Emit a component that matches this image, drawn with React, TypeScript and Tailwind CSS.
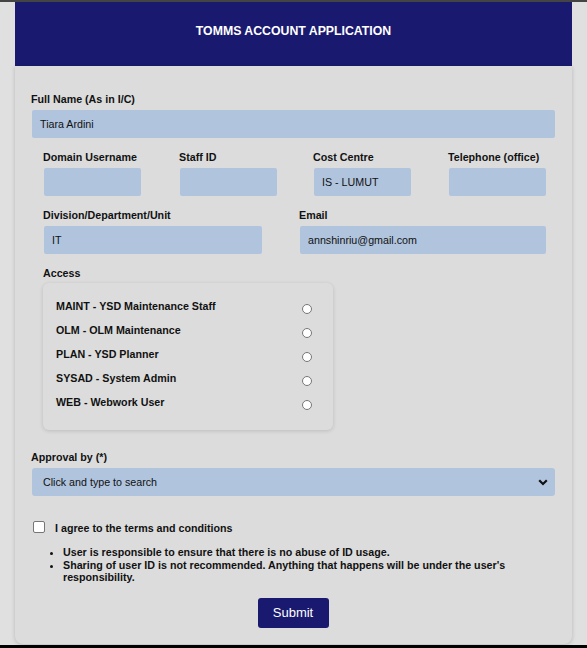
import React from "react";

const label = "block text-[10.7px] leading-[12px] font-bold text-[#111]";
const field =
  "h-[28px] rounded-[2px] bg-[#b0c4de] px-2 flex items-center text-[10.7px] text-[#111]";

const accessItems = [
  "MAINT - YSD Maintenance Staff",
  "OLM - OLM Maintenance",
  "PLAN - YSD Planner",
  "SYSAD - System Admin",
  "WEB - Webwork User",
];

export default function App() {
  return (
    <div className="w-[587px] h-[648px] bg-[#e0e0e0] flex flex-col overflow-hidden font-['Liberation_Sans',Arial,sans-serif]">
      <div className="h-[2px] bg-[#444444] shrink-0" />
      <div className="mx-[15px] flex flex-col">
        <div className="h-[64px] bg-[#191970] flex justify-center pt-[22px]">
          <h1 className="text-white font-bold text-[12.3px] leading-[14px]">
            TOMMS ACCOUNT APPLICATION
          </h1>
        </div>

        <div className="h-[578px] bg-[#dcdcdc] rounded-b-lg shadow-[0_1px_4px_rgba(0,0,0,0.18)] pt-[27px] pl-[16px] pr-[17px]">
          <label className={label}>Full Name (As in I/C)</label>
          <div className={`${field} mt-[5px] h-[27px] ml-px`}>Tiara Ardini</div>

          <div className="grid grid-cols-[136px_134px_135px_100px] pl-[12px] mt-[13px]">
            {[
              ["Domain Username", ""],
              ["Staff ID", ""],
              ["Cost Centre", "IS - LUMUT"],
              ["Telephone (office)", ""],
            ].map(([name, value]) => (
              <div key={name}>
                <label className={`${label} whitespace-nowrap`}>{name}</label>
                <div className={`${field} mt-[5px] w-[97px] ml-px`}>{value}</div>
              </div>
            ))}
          </div>

          <div className="grid grid-cols-[256px_250px] pl-[12px] mt-[13px]">
            <div>
              <label className={label}>Division/Department/Unit</label>
              <div className={`${field} mt-[5px] w-[218px] ml-px`}>IT</div>
            </div>
            <div>
              <label className={label}>Email</label>
              <div className={`${field} mt-[5px] w-[246px] ml-px`}>annshinriu@gmail.com</div>
            </div>
          </div>

          <div className="pl-[12px] mt-[13px]">
            <label className={label}>Access</label>
            <div className="mt-[4px] w-[290px] h-[147px] rounded-[6px] bg-[#dcdcdc] shadow-[0_1px_4px_rgba(0,0,0,0.14)] pt-[11px] pl-[13px]">
              {accessItems.map((item) => (
                <div key={item} className="h-[24px] flex items-center">
                  <span className="w-[246px] text-[10.7px] font-bold text-[#111] leading-[12px]">
                    {item}
                  </span>
                  <span className="mt-[6px] w-[10px] h-[10px] rounded-full border border-[#767676] bg-white" />
                </div>
              ))}
            </div>
          </div>

          <label className={`${label} mt-[21px]`}>Approval by (*)</label>
          <div className="mt-[5px] h-[28px] ml-px rounded-[3px] bg-[#b0c4de] pl-[11px] pr-[4px] flex items-center justify-between text-[10.7px] text-[#111]">
            <span>Click and type to search</span>
            <svg width="10" height="7" viewBox="0 0 10 7" className="mr-[3px]">
              <polyline
                points="1.2,1.3 5,5 8.8,1.3"
                fill="none"
                stroke="#111"
                strokeWidth="2.2"
              />
            </svg>
          </div>

          <div className="mt-[23px] flex items-center">
            <span className="ml-[2px] w-[12px] h-[12px] rounded-[2px] border border-[#767676] bg-white" />
            <span className="ml-[10px] mt-[3px] text-[10.7px] font-bold leading-[12px] text-[#111]">
              I agree to the terms and conditions
            </span>
          </div>

          <ul className="mt-[12px] pl-[32px] pr-[20px] list-disc text-[10.7px] font-bold leading-[12.5px] text-[#111]">
            <li>User is responsible to ensure that there is no abuse of ID usage.</li>
            <li>
              Sharing of user ID is not recommended. Anything that happens will be under the
              user's responsibility.
            </li>
          </ul>

          <div className="mt-[14px] flex justify-center">
            <button className="w-[71px] h-[30px] rounded-[3px] bg-[#191970] text-white text-[13px]">
              Submit
            </button>
          </div>
        </div>
      </div>
      <div className="flex-1" />
      <div className="h-[3px] bg-black shrink-0" />
    </div>
  );
}
